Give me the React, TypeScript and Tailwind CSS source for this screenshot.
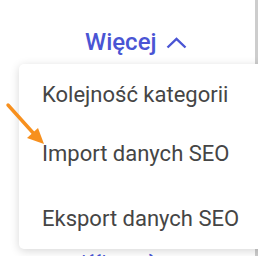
import React from 'react';

const items = [
  { label: 'Kolejność kategorii', gap: 'mt-0' },
  { label: 'Import danych SEO', gap: 'mt-[31px]' },
  { label: 'Eksport danych SEO', gap: 'mt-[37px]' },
];

export default function App() {
  return (
    <div className="relative h-[256px] w-[258px] overflow-hidden bg-white font-['Roboto',sans-serif]">
      {/* page behind the menu */}
      <div className="flex h-full flex-col border-r-[3px] border-[#cdcdcd]">
        <div className="flex items-center pl-[85px] pt-[28px]">
          <span className="text-[24px] font-medium leading-[28px] text-[#4a55d4]">Więcej</span>
          <svg className="ml-[9px] mt-[1px]" width="21" height="12" viewBox="0 0 21 12" fill="none">
            <path d="M1.5 10.5 L10.5 2 L19.5 10.5" stroke="#4a55d4" strokeWidth="2.4" />
          </svg>
        </div>
        <div className="mt-[56px] h-px w-full bg-[#e4e4e4]" />
        <div className="mt-[99px] h-px w-full bg-[#dfe1f5]" />
        <div className="mt-[40px] pl-[81px] text-[22px] font-medium leading-[26px] text-[#4a55d4]">
          |{'{{'}|<span className="ml-[42px]">{'}'}</span>
        </div>
      </div>

      {/* dropdown */}
      <div className="absolute left-[19px] top-[64px] h-[185px] w-[260px] rounded-[5px] bg-white pl-[23px] pt-[17px] shadow-[0_2px_10px_rgba(0,0,0,0.16)]">
        <ul className="flex flex-col">
          {items.map((it) => (
            <li key={it.label} className={`${it.gap} text-[22px] leading-[28px] text-[#454545]`}>
              {it.label}
            </li>
          ))}
        </ul>
      </div>

      {/* annotation arrow */}
      <svg className="absolute left-0 top-[98px]" width="50" height="52" viewBox="0 0 50 52">
        <path d="M8 7 L35 37" stroke="#f7901e" strokeWidth="3.4" strokeLinecap="round" />
        <path d="M44 46 L27 40 L38 30 Z" fill="#f7901e" />
      </svg>
    </div>
  );
}
